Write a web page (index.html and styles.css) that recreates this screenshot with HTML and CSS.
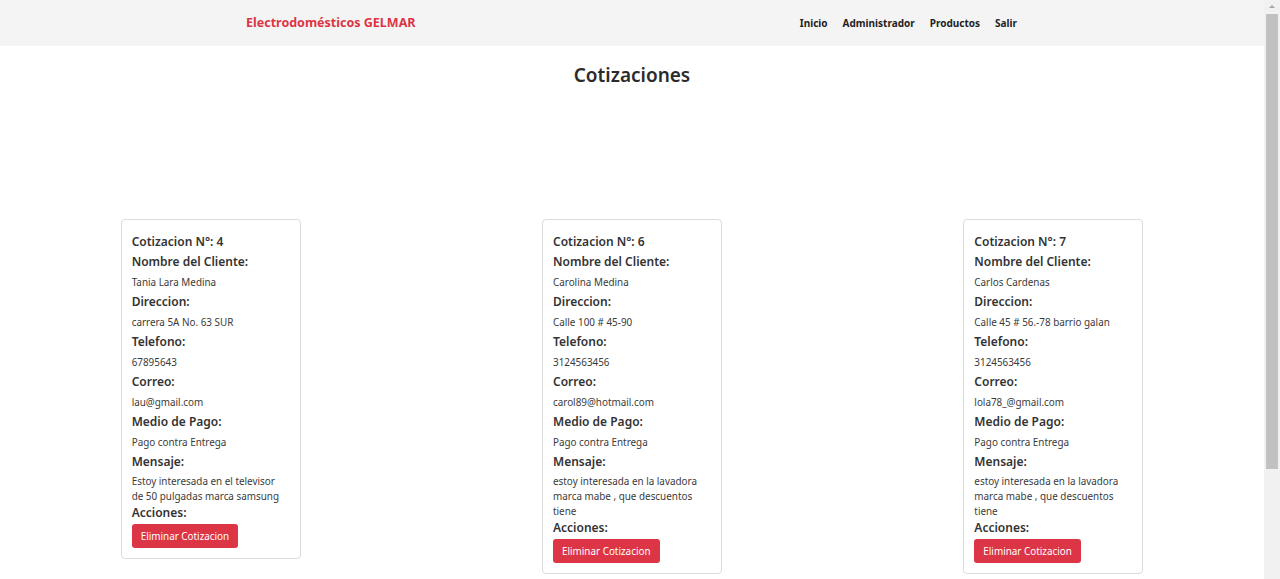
FILE: index.html
```html
<!DOCTYPE html>
<html lang="es">
<head>
<meta charset="utf-8">
<title>Cotizaciones</title>
<link rel="stylesheet" href="styles.css">
</head>
<body>
<div class="page">
  <nav class="navbar">
    <div class="nav-inner">
      <a class="brand" href="#">Electrodomésticos GELMAR</a>
      <ul class="nav-links">
        <li><a href="#">Inicio</a></li>
        <li><a href="#">Administrador</a></li>
        <li><a href="#">Productos</a></li>
        <li><a href="#">Salir</a></li>
      </ul>
    </div>
  </nav>
  <h1 class="page-title">Cotizaciones</h1>
  <div class="cards">
    <div class="card">
      <div class="card-title">Cotizacion N°: 4</div>
      <div class="label">Nombre del Cliente:</div>
      <div class="value">Tania Lara Medina</div>
      <div class="label">Direccion:</div>
      <div class="value">carrera 5A No. 63 SUR</div>
      <div class="label">Telefono:</div>
      <div class="value">67895643</div>
      <div class="label">Correo:</div>
      <div class="value">lau@gmail.com</div>
      <div class="label">Medio de Pago:</div>
      <div class="value">Pago contra Entrega</div>
      <div class="label">Mensaje:</div>
      <div class="value message">Estoy interesada en el televisor de 50 pulgadas marca samsung</div>
      <div class="label actions">Acciones:</div>
      <button class="btn-danger">Eliminar Cotizacion</button>
    </div>
    <div class="card">
      <div class="card-title">Cotizacion N°: 6</div>
      <div class="label">Nombre del Cliente:</div>
      <div class="value">Carolina Medina</div>
      <div class="label">Direccion:</div>
      <div class="value">Calle 100 # 45-90</div>
      <div class="label">Telefono:</div>
      <div class="value">3124563456</div>
      <div class="label">Correo:</div>
      <div class="value">carol89@hotmail.com</div>
      <div class="label">Medio de Pago:</div>
      <div class="value">Pago contra Entrega</div>
      <div class="label">Mensaje:</div>
      <div class="value message">estoy interesada en la lavadora marca mabe , que descuentos tiene</div>
      <div class="label actions">Acciones:</div>
      <button class="btn-danger">Eliminar Cotizacion</button>
    </div>
    <div class="card">
      <div class="card-title">Cotizacion N°: 7</div>
      <div class="label">Nombre del Cliente:</div>
      <div class="value">Carlos Cardenas</div>
      <div class="label">Direccion:</div>
      <div class="value">Calle 45 # 56.-78 barrio galan</div>
      <div class="label">Telefono:</div>
      <div class="value">3124563456</div>
      <div class="label">Correo:</div>
      <div class="value">lola78_@gmail.com</div>
      <div class="label">Medio de Pago:</div>
      <div class="value">Pago contra Entrega</div>
      <div class="label">Mensaje:</div>
      <div class="value message">estoy interesada en la lavadora marca mabe , que descuentos tiene</div>
      <div class="label actions">Acciones:</div>
      <button class="btn-danger">Eliminar Cotizacion</button>
    </div>
  </div>
</div>
<div class="scrollbar" aria-hidden="true">
  <div class="scroll-arrow"></div>
  <div class="scroll-thumb"></div>
</div>
</body>
</html>
```

FILE: styles.css
```css
html, body {
  margin: 0;
  padding: 0;
  height: 100%;
  overflow: hidden;
  background: #fff;
}

body {
  font-family: "Noto Sans", "Open Sans", sans-serif;
  color: #212529;
}

.page {
  width: 1264px;
}

.navbar {
  background: #f4f4f4;
  height: 46px;
  box-sizing: border-box;
  padding-bottom: 2px;
  display: flex;
  align-items: center;
}

.nav-inner {
  width: 771px;
  margin: 0 auto;
  padding-right: 1px;
  display: flex;
  justify-content: space-between;
  align-items: center;
}

.brand {
  color: #dc3545;
  font-weight: 700;
  font-size: 12.5px;
  text-decoration: none;
}

.nav-links {
  list-style: none;
  margin: 0;
  padding: 0 0 3px;
  display: flex;
  gap: 15px;
}

.nav-links a {
  color: #1f1f1f;
  font-weight: 700;
  font-size: 10px;
  text-decoration: none;
}

.page-title {
  margin: 14px 0 0;
  text-align: center;
  font-size: 19px;
  font-weight: 600;
  line-height: 30px;
  color: #2b2b2b;
}

.cards {
  margin-top: 129px;
  display: grid;
  grid-template-columns: repeat(3, 1fr);
  justify-items: center;
  align-items: start;
}

.card {
  width: 180px;
  box-sizing: border-box;
  border: 1px solid #dcdcdc;
  border-radius: 4px;
  padding: 12px 16px 10px 10px;
  display: flex;
  flex-direction: column;
  align-items: flex-start;
}

.card-title,
.label {
  font-size: 12px;
  font-weight: 600;
  line-height: 20px;
  color: #333;
}

.value {
  font-size: 9.9px;
  line-height: 15px;
  padding: 2.5px 0;
  color: #3a3a3a;
}

.value.message {
  padding: 1.5px 0 0;
}

.actions {
  line-height: 17px;
}

.btn-danger {
  margin-top: 3px;
  font-family: inherit;
  font-size: 9.9px;
  height: 24px;
  padding: 0 9px;
  border: 0;
  border-radius: 3px;
  background: #dc3545;
  color: #fff;
  cursor: pointer;
}

.scrollbar {
  position: fixed;
  top: 0;
  right: 0;
  width: 16px;
  height: 100%;
  background: #f1f1f1;
}

.scroll-arrow {
  width: 0;
  height: 0;
  margin: 5px auto 0;
  border-left: 3px solid transparent;
  border-right: 3px solid transparent;
  border-bottom: 3px solid #a3a3a3;
}

.scroll-thumb {
  position: absolute;
  top: 14px;
  left: 2px;
  width: 12px;
  height: 455px;
  background: #c1c1c1;
}
```
